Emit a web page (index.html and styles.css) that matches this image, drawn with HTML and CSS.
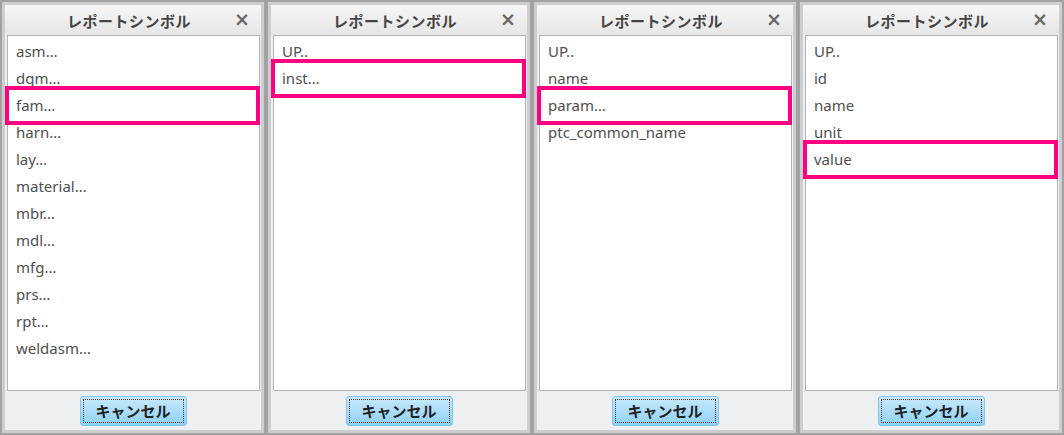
FILE: index.html
```html
<!DOCTYPE html>
<html lang="ja">
<head>
    <meta charset="UTF-8" />
    <meta name="viewport" content="width=device-width, initial-scale=1" />
    <title>レポートシンボル</title>
    <link rel="stylesheet" href="styles.css">
</head>
<body>
    <div class="dialogs">
        <div class="dialog">
            <div class="dialog-inner">
                <div class="titlebar">
                    <span class="title">レポートシンボル</span>
                    <span class="close">×</span>
                </div>
                <ul class="symbols">
                    <li>asm…</li>
                    <li>dgm…</li>
                    <li class="marked">fam…</li>
                    <li>harn…</li>
                    <li>lay…</li>
                    <li>material…</li>
                    <li>mbr…</li>
                    <li>mdl…</li>
                    <li>mfg…</li>
                    <li>prs…</li>
                    <li>rpt…</li>
                    <li>weldasm…</li>
                </ul>
                <div class="footer">
                    <button class="cancel"><span>キャンセル</span></button>
                </div>
            </div>
        </div>

        <div class="dialog">
            <div class="dialog-inner">
                <div class="titlebar">
                    <span class="title">レポートシンボル</span>
                    <span class="close">×</span>
                </div>
                <ul class="symbols">
                    <li>UP..</li>
                    <li class="marked">inst…</li>
                </ul>
                <div class="footer">
                    <button class="cancel"><span>キャンセル</span></button>
                </div>
            </div>
        </div>

        <div class="dialog">
            <div class="dialog-inner">
                <div class="titlebar">
                    <span class="title">レポートシンボル</span>
                    <span class="close">×</span>
                </div>
                <ul class="symbols">
                    <li>UP..</li>
                    <li>name</li>
                    <li class="marked">param…</li>
                    <li>ptc_common_name</li>
                </ul>
                <div class="footer">
                    <button class="cancel"><span>キャンセル</span></button>
                </div>
            </div>
        </div>

        <div class="dialog">
            <div class="dialog-inner">
                <div class="titlebar">
                    <span class="title">レポートシンボル</span>
                    <span class="close">×</span>
                </div>
                <ul class="symbols">
                    <li>UP..</li>
                    <li>id</li>
                    <li>name</li>
                    <li>unit</li>
                    <li class="marked">value</li>
                </ul>
                <div class="footer">
                    <button class="cancel"><span>キャンセル</span></button>
                </div>
            </div>
        </div>
    </div>
</body>
</html>
```

FILE: styles.css
```css
body {
    margin: 0;
    font-family: "Noto Sans", "Noto Sans CJK JP", sans-serif;
    background-color: #a2a2a2;
}
.dialogs {
    display: flex;
    width: 1064px;
    height: 435px;
}
.dialog {
    width: 266px;
    height: 435px;
    box-sizing: border-box;
    border: 2px solid #a2a2a2;
    padding: 3px;
    background-color: #cdced0;
}
.dialog-inner {
    display: flex;
    flex-direction: column;
    height: 100%;
    background-color: #eeeff1;
}
.titlebar {
    position: relative;
    height: 30px;
    display: flex;
    align-items: center;
    justify-content: center;
    background: linear-gradient(#f6f6f6, #e6e6e6);
}
.title {
    font-family: "Noto Sans CJK JP", sans-serif;
    font-weight: bold;
    font-size: 15px;
    letter-spacing: 0.5px;
    color: #454545;
    margin-right: 8px;
}
.close {
    position: absolute;
    right: 11px;
    top: 4px;
    font-family: "DejaVu Sans", sans-serif;
    font-weight: bold;
    font-size: 19px;
    line-height: 20px;
    color: #6a6a6a;
}
.symbols {
    list-style: none;
    margin: 0 1px 0 2px;
    padding: 2px 0 0 0;
    height: 356px;
    box-sizing: border-box;
    background-color: #fff;
    border: 1px solid #b4b4b4;
}
.symbols li {
    position: relative;
    height: 27px;
    line-height: 27px;
    padding-left: 8px;
    font-size: 15px;
    color: #4f4f4f;
}
.symbols li.marked::after {
    content: "";
    position: absolute;
    top: -6px;
    bottom: -6px;
    left: -3px;
    right: -1px;
    border: 4px solid #fe0080;
}
.footer {
    flex: 1;
    display: flex;
    justify-content: center;
    align-items: center;
}
.cancel {
    width: 107px;
    height: 30px;
    padding: 2px;
    border: 1px solid #7cc6ee;
    border-radius: 3px;
    background: linear-gradient(#c8eafc, #8fd1f6);
    cursor: pointer;
}
.cancel span {
    display: block;
    height: 100%;
    box-sizing: border-box;
    border: 1px dotted #5a2e24;
    font-family: "Noto Sans CJK JP", sans-serif;
    font-weight: bold;
    font-size: 15px;
    line-height: 22px;
    color: #222;
}
```
